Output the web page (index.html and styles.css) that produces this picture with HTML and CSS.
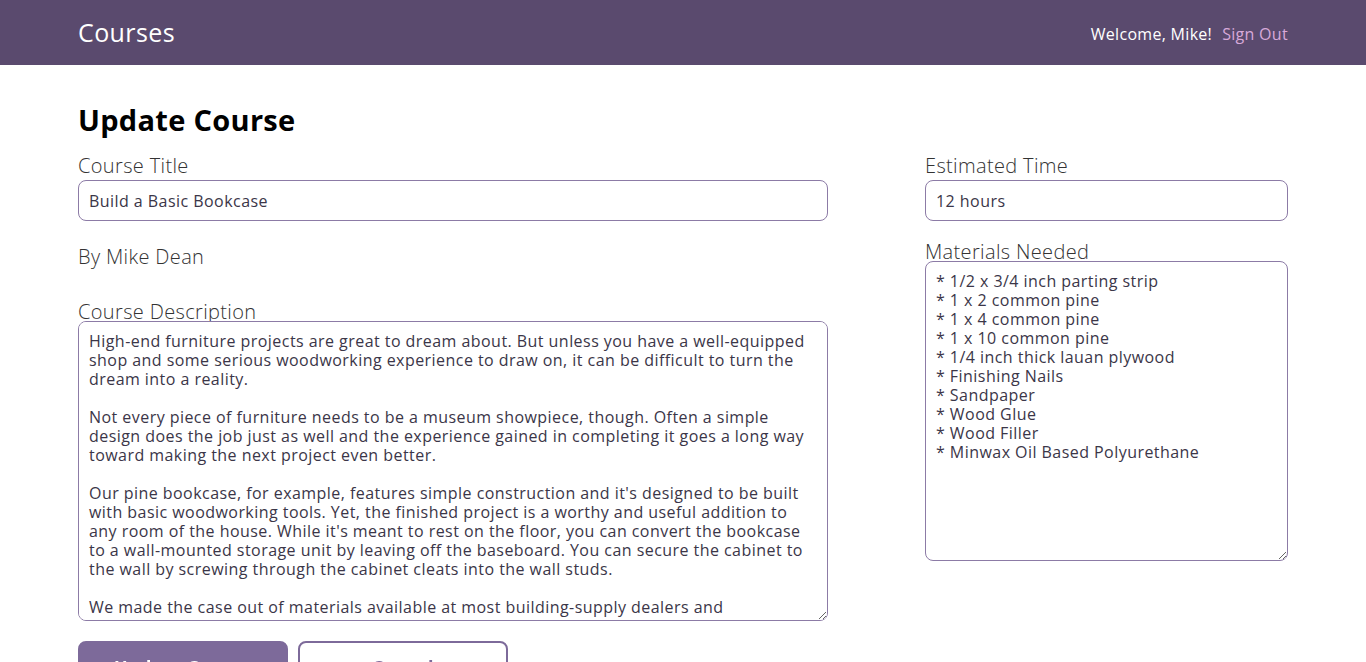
FILE: index.html
```html
<!DOCTYPE html>
<html lang="en">
<head>
<meta charset="utf-8">
<title>Courses</title>
<link rel="stylesheet" href="styles.css">
</head>
<body>
<header class="header">
  <div class="bounds header-inner">
    <h1 class="header-logo">Courses</h1>
    <nav class="header-nav">
      <span class="welcome">Welcome, Mike!</span>
      <a class="signout" href="#">Sign Out</a>
    </nav>
  </div>
</header>
<main class="bounds main">
  <h2 class="page-title">Update Course</h2>
  <form class="form">
    <div class="form-grid">
      <div class="col-main">
        <label class="label" for="title">Course Title</label>
        <input class="field" id="title" type="text" value="Build a Basic Bookcase">
        <p class="author">By Mike Dean</p>
        <label class="label label-desc" for="desc">Course Description</label>
        <textarea class="field area" id="desc">High-end furniture projects are great to dream about. But unless you have a well-equipped shop and some serious woodworking experience to draw on, it can be difficult to turn the dream into a reality.

Not every piece of furniture needs to be a museum showpiece, though. Often a simple design does the job just as well and the experience gained in completing it goes a long way toward making the next project even better.

Our pine bookcase, for example, features simple construction and it's designed to be built with basic woodworking tools. Yet, the finished project is a worthy and useful addition to any room of the house. While it's meant to rest on the floor, you can convert the bookcase to a wall-mounted storage unit by leaving off the baseboard. You can secure the cabinet to the wall by screwing through the cabinet cleats into the wall studs.

We made the case out of materials available at most building-supply dealers and lumberyards, including 1/2 x 3/4-in. parting strip, 1 x 2, 1 x 4 and 1 x 10 common pine and 1/4-in.-thick lauan plywood. Assembly is quick and easy with glue and nails, and when you're done with construction you have the option of a painted or clear finish.</textarea>
      </div>
      <div class="col-side">
        <label class="label" for="time">Estimated Time</label>
        <input class="field" id="time" type="text" value="12 hours">
        <label class="label label-mat" for="mat">Materials Needed</label>
        <textarea class="field area" id="mat">* 1/2 x 3/4 inch parting strip
* 1 x 2 common pine
* 1 x 4 common pine
* 1 x 10 common pine
* 1/4 inch thick lauan plywood
* Finishing Nails
* Sandpaper
* Wood Glue
* Wood Filler
* Minwax Oil Based Polyurethane</textarea>
      </div>
    </div>
    <div class="actions">
      <button class="btn btn-primary" type="submit">Update Course</button>
      <button class="btn btn-secondary" type="button">Cancel</button>
    </div>
  </form>
</main>
</body>
</html>
```
FILE: styles.css
```css
* { box-sizing: border-box; }
body {
  margin: 0;
  font-family: "Open Sans", "Noto Sans", sans-serif;
  letter-spacing: 0.35px;
  color: #2b2b2b;
  background: #fff;
}
.bounds {
  width: 1210px;
  margin: 0 auto;
}
.header {
  background: #5a4a6e;
  height: 65px;
}
.header-inner {
  height: 65px;
  display: flex;
  align-items: center;
  justify-content: space-between;
}
.header-logo {
  margin: 0;
  font-size: 25px;
  letter-spacing: 0.4px;
  font-weight: 400;
  color: #fff;
  line-height: 30px;
  padding-bottom: 1px;
}
.header-nav {
  display: flex;
  gap: 10px;
  font-size: 16px;
  letter-spacing: 0.3px;
  padding-top: 3px;
}
.welcome { color: #fff; font-weight: 500; }
.signout { color: #d8a9d9; text-decoration: none; }
.main {
  padding-top: 38px;
}
.page-title {
  margin: 0;
  font-size: 29px;
  letter-spacing: 0.3px;
  line-height: 33px;
  font-weight: 700;
  color: #000;
}
.form-grid {
  display: grid;
  grid-template-columns: 750px 363px;
  column-gap: 97px;
  margin-top: 19px;
}
.col-main, .col-side {
  display: flex;
  flex-direction: column;
  align-items: stretch;
}
.label {
  font-size: 20px;
  line-height: 20px;
  padding-top: 1px;
  font-weight: 300;
  color: #333;
  margin-bottom: 4px;
}
.label-desc { margin-top: 34px; margin-bottom: -1px; }
.label-mat { margin-top: 20px; margin-bottom: -1px; }
.author {
  margin: 26px 0 0;
  font-size: 20px;
  line-height: 20px;
  font-weight: 300;
  color: #333;
}
.field {
  font-family: inherit;
  font-size: 16px;
  letter-spacing: 0.45px;
  color: #3b3648;
  border: 1px solid #8c7ba6;
  border-radius: 8px;
  padding: 0 10px;
  height: 41px;
  outline: none;
  background: #fff;
}
.area {
  height: 300px;
  line-height: 19px;
  padding: 10px 10px;
  resize: vertical;
}
.actions {
  display: flex;
  gap: 10px;
  margin-top: 20px;
}
.btn {
  width: 210px;
  height: 52px;
  border-radius: 8px;
  font-family: inherit;
  font-size: 18px;
  letter-spacing: 0.4px;
  font-weight: 700;
  cursor: pointer;
}
.btn-primary {
  background: #7d6a9a;
  color: #fff;
  border: 2px solid #7d6a9a;
}
.btn-secondary {
  background: #fff;
  color: #7d6a9a;
  border: 2px solid #7d6a9a;
}
```
